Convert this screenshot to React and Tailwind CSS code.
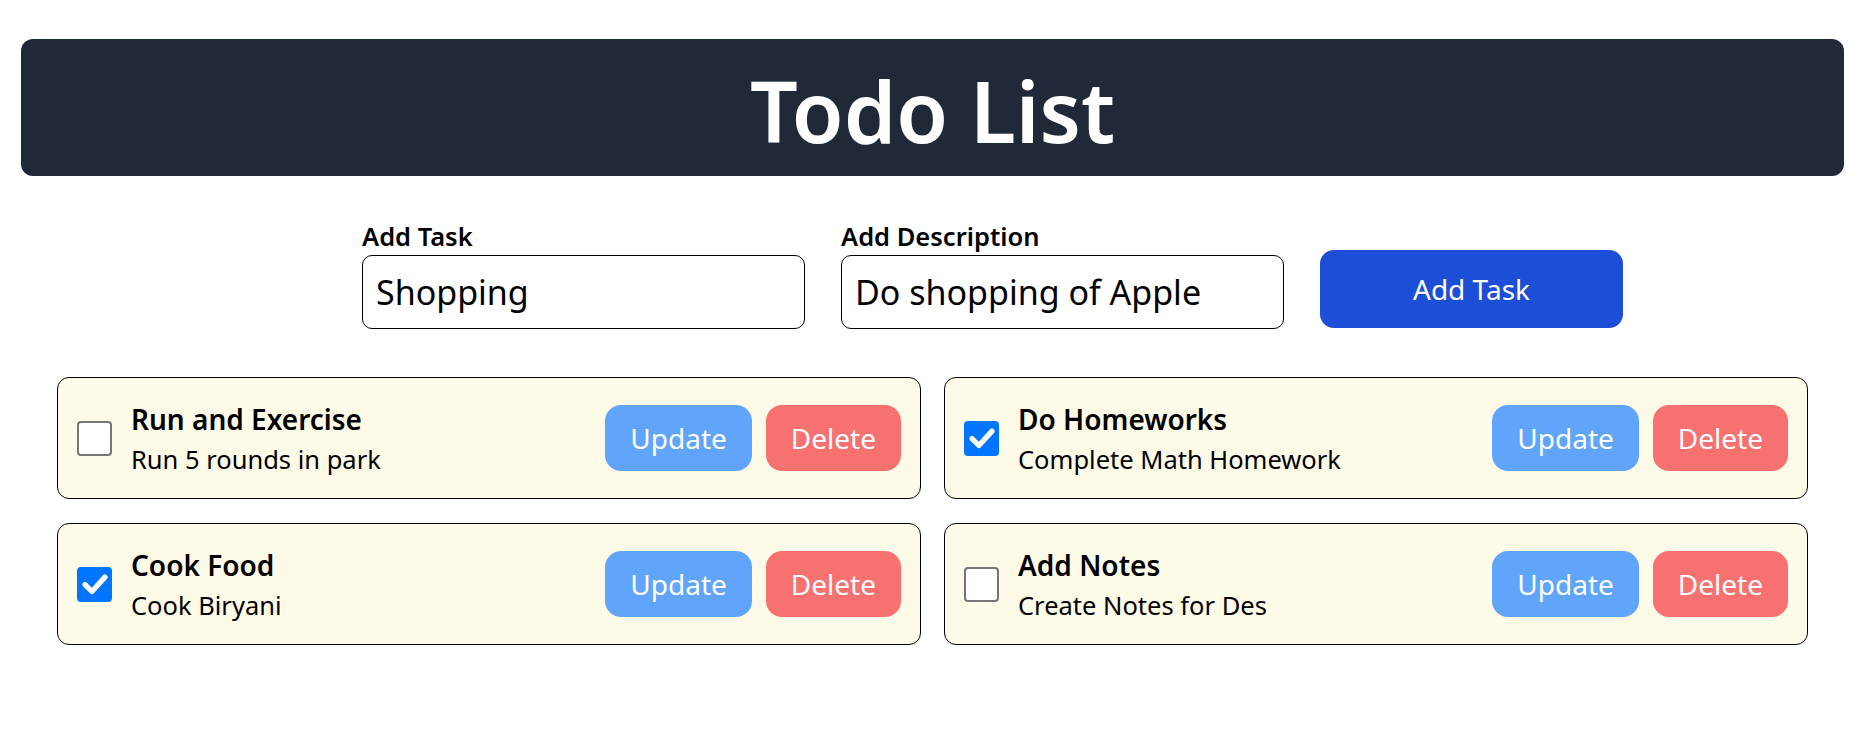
import React from "react";

const todos = [
  { title: "Run and Exercise", desc: "Run 5 rounds in park", done: false },
  { title: "Do Homeworks", desc: "Complete Math Homework", done: true },
  { title: "Cook Food", desc: "Cook Biryani", done: true },
  { title: "Add Notes", desc: "Create Notes for Des", done: false },
];

function Check({ done }) {
  if (done) {
    return (
      <div className="flex h-[35px] w-[35px] shrink-0 items-center justify-center rounded-[4px] bg-[#0075ff]">
        <svg width="30" height="30" viewBox="0 0 24 24" fill="none">
          <path d="M4 12.5 L9.5 18 L20 6.5" stroke="white" strokeWidth="4.2" strokeLinecap="round" strokeLinejoin="round" />
        </svg>
      </div>
    );
  }
  return <div className="h-[35px] w-[35px] shrink-0 rounded-[4px] border-2 border-[#767676] bg-white" />;
}

function Card({ t }) {
  return (
    <div className="flex h-[122px] items-center rounded-[12px] border border-black bg-[#fefae8] pl-[19px] pr-[19px]">
      <Check done={t.done} />
      <div className="ml-[19px] flex flex-1 flex-col text-black">
        <div className="text-[28px] font-semibold leading-[36px]">{t.title}</div>
        <div className="mt-[6px] text-[25.5px] leading-[33px]">{t.desc}</div>
      </div>
      <div className="flex gap-[14px]">
        <button className="h-[66px] rounded-[16px] bg-[#60a5fa] px-[25px] text-[28px] text-white">Update</button>
        <button className="h-[66px] rounded-[16px] bg-[#f87171] px-[25px] text-[28px] text-white">Delete</button>
      </div>
    </div>
  );
}

export default function App() {
  return (
    <div className="min-h-[744px] bg-white pt-[39px] font-['Noto_Sans',sans-serif]">
      <div className="ml-[21px] mr-[5px] rounded-[12px] bg-[#1f2937] pb-[23px] pt-[30px] text-center text-[84px] font-semibold leading-[84px] text-white">
        Todo List
      </div>

      <div className="mt-[44px] flex items-end pl-[362px]">
        <div className="flex flex-col">
          <label className="text-[25.5px] font-semibold leading-[32px] text-black">Add Task</label>
          <input
            defaultValue="Shopping"
            className="mt-[3px] h-[74px] w-[443px] rounded-[10px] border border-black px-[13px] text-[34px] text-black outline-none"
          />
        </div>
        <div className="ml-[36px] flex flex-col">
          <label className="text-[25.5px] font-semibold leading-[32px] text-black">Add Description</label>
          <input
            defaultValue="Do shopping of Apple"
            className="mt-[3px] h-[74px] w-[443px] rounded-[10px] border border-black px-[13px] text-[34px] text-black outline-none"
          />
        </div>
        <button className="mb-[1px] ml-[36px] h-[78px] w-[303px] rounded-[14px] bg-[#1d4ed8] text-[28px] text-white">
          Add Task
        </button>
      </div>

      <div className="ml-[57px] mr-[41px] mt-[48px] grid grid-cols-2 gap-x-[23px] gap-y-[24px]">
        {todos.map((t) => (
          <Card key={t.title} t={t} />
        ))}
      </div>
    </div>
  );
}
